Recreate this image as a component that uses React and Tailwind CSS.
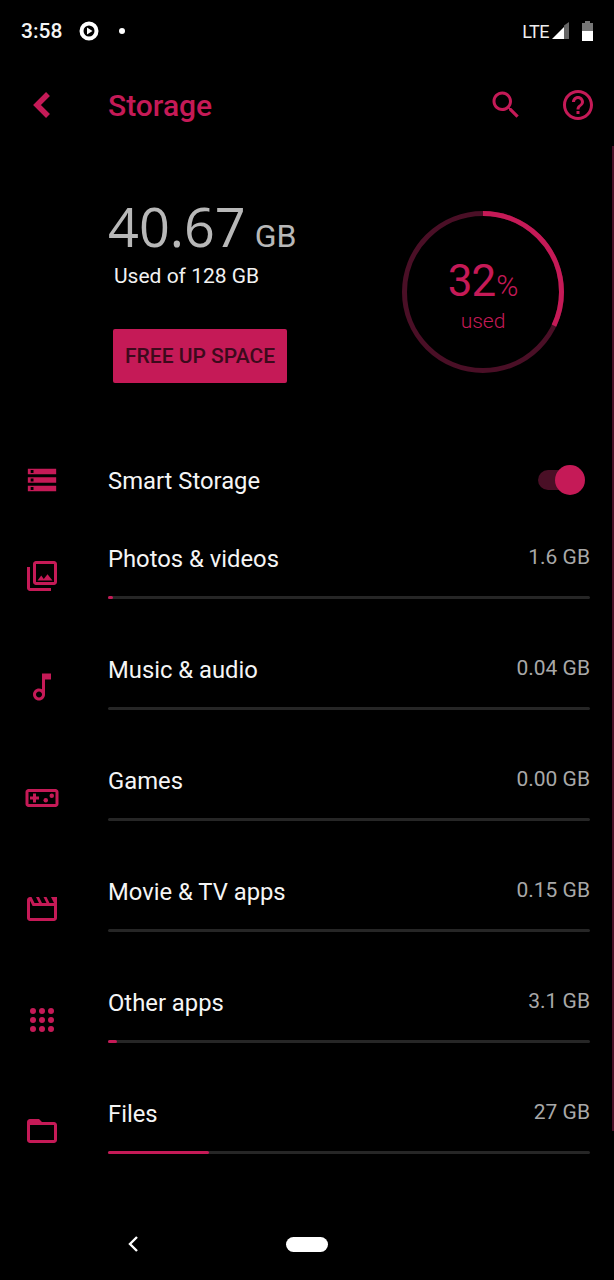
const PINK = '#c51a57';

const Icon = ({ size = 36, className = '', children }) => (
  <svg width={size} height={size} viewBox="0 0 24 24" fill={PINK} className={className}>
    {children}
  </svg>
);

const rows = [
  {
    label: 'Photos & videos',
    size: '1.6 GB',
    used: 5,
    icon: <path d="M20 4v12H8V4h12m0-2H8c-1.1 0-2 .9-2 2v12c0 1.1.9 2 2 2h12c1.1 0 2-.9 2-2V4c0-1.1-.9-2-2-2zm-8.5 9.67l1.69 2.26 2.48-3.1L19 15H9zM2 6v14c0 1.1.9 2 2 2h14v-2H4V6H2z" />,
  },
  {
    label: 'Music & audio',
    size: '0.04 GB',
    used: 0,
    icon: <path d="M12 3l.01 10.55c-.59-.34-1.27-.55-2.01-.55C7.79 13 6 14.79 6 17s1.79 4 4.01 4S14 19.21 14 17V7h4V3h-6zm-1.99 16c-1.1 0-2-.9-2-2s.9-2 2-2 2 .9 2 2-.9 2-2 2z" />,
  },
  {
    label: 'Games',
    size: '0.00 GB',
    used: 0,
    icon: (
      <>
        <path d="M21 6H3c-1.1 0-2 .9-2 2v8c0 1.1.9 2 2 2h18c1.1 0 2-.9 2-2V8c0-1.1-.9-2-2-2zm0 10H3V8h18v8zM6 15h2v-2h2v-2H8V9H6v2H4v2h2z" />
        <circle cx="14.5" cy="13.5" r="1.5" />
        <circle cx="18.5" cy="10.5" r="1.5" />
      </>
    ),
  },
  {
    label: 'Movie & TV apps',
    size: '0.15 GB',
    used: 0,
    icon: <path d="M4 6.47L5.76 10H20v8H4V6.47M22 4h-4l2 4h-3l-2-4h-2l2 4h-3l-2-4H8l2 4H7L5 4H4c-1.1 0-1.99.9-1.99 2L2 18c0 1.1.9 2 2 2h16c1.1 0 2-.9 2-2V4z" />,
  },
  {
    label: 'Other apps',
    size: '3.1 GB',
    used: 9,
    icon: (
      <>
        {[6, 12, 18].map((y) =>
          [6, 12, 18].map((x) => <circle key={`${x}-${y}`} cx={x} cy={y} r="2" />)
        )}
      </>
    ),
  },
  {
    label: 'Files',
    size: '27 GB',
    used: 101,
    icon: <path d="M20 6h-8l-2-2H4c-1.1 0-1.99.9-1.99 2L2 18c0 1.1.9 2 2 2h16c1.1 0 2-.9 2-2V8c0-1.1-.9-2-2-2zm0 12H4V8h16v10z" />,
  },
];

const StatusBar = () => (
  <div className="h-[62px] flex items-center justify-between pl-[21px] pr-[21px] text-white">
    <div className="flex items-center">
      <span className="text-[21px] font-medium w-[48px] text-[#f5f5f5] mt-[2px]">3:58</span>
      <svg width="20" height="20" viewBox="0 0 20 20" className="ml-[10px]">
        <circle cx="10" cy="10" r="7.5" fill="none" stroke="#fff" strokeWidth="4" />
        <path d="M8 6.5v7l5.5-3.5z" fill="#fff" />
      </svg>
      <div className="w-[6px] h-[6px] rounded-full bg-white ml-[20px]" />
    </div>
    <div className="flex items-center">
      <span className="text-[18px] text-[#eeeeee] tracking-[-0.5px]">LTE</span>
      <svg width="18" height="18" viewBox="0 0 18 18" className="ml-[3px]">
        <path d="M0 17L12 5v12z" fill="#fff" />
        <path d="M12 3.5L17 0v17h-5z" fill="#666" />
      </svg>
      <svg width="11" height="20" viewBox="0 0 11 20" className="ml-[12px]">
        <path d="M3 0h5v2h3v9H0V2h3z" fill="#777" />
        <path d="M0 10h11v10H0z" fill="#fff" />
      </svg>
    </div>
  </div>
);

const Header = () => (
  <div className="h-[86px] flex items-center relative">
    <div className="w-[108px] flex justify-center pr-[22px]">
      <svg width="24" height="30" viewBox="0 0 24 30">
        <path d="M17 4L6 15l11 11" fill="none" stroke={PINK} strokeWidth="5.5" />
      </svg>
    </div>
    <h1 className="text-[30px] font-medium leading-none mt-[2px]" style={{ color: PINK }}>Storage</h1>
    <div className="ml-auto flex items-center gap-[36px] pr-[18px]">
      <Icon>
        <path d="M15.5 14h-.79l-.28-.27C15.41 12.59 16 11.11 16 9.5 16 5.91 13.09 3 9.5 3S3 5.91 3 9.5 5.91 16 9.5 16c1.61 0 3.09-.59 4.23-1.57l.27.28v.79l5 4.99L20.49 19l-4.99-5zm-6 0C7.01 14 5 11.99 5 9.5S7.01 5 9.5 5 14 7.01 14 9.5 11.99 14 9.5 14z" />
      </Icon>
      <Icon>
        <path d="M11 18h2v-2h-2v2zm1-16C6.48 2 2 6.48 2 12s4.48 10 10 10 10-4.48 10-10S17.52 2 12 2zm0 18c-4.41 0-8-3.59-8-8s3.59-8 8-8 8 3.59 8 8-3.59 8-8 8zm0-14c-2.21 0-4 1.79-4 4h2c0-1.1.9-2 2-2s2 .9 2 2c0 2-3 1.75-3 5h2c0-2.25 3-2.5 3-5 0-2.21-1.79-4-4-4z" />
      </Icon>
    </div>
  </div>
);

const Ring = () => (
  <div className="relative w-[164px] h-[164px]">
    <svg width="164" height="164" viewBox="0 0 164 164">
      <circle cx="82" cy="82" r="78.5" fill="none" stroke="#4a0f26" strokeWidth="5" />
      <circle
        cx="82"
        cy="82"
        r="78.5"
        fill="none"
        stroke={PINK}
        strokeWidth="5"
        strokeDasharray="157.8 335.4"
        transform="rotate(-90 82 82)"
      />
    </svg>
    <div className="absolute inset-0 flex flex-col items-center justify-center" style={{ color: PINK }}>
      <div className="flex items-baseline leading-none mt-[8px]">
        <span className="text-[44px] leading-[44px] tracking-[-1px]">32</span>
        <span className="text-[30px] font-light leading-[28px] ml-[1px]">%</span>
      </div>
      <span className="text-[21px] font-light leading-[24px] mt-[6px]">used</span>
    </div>
  </div>
);

const Hero = () => (
  <div className="h-[292px] flex items-start justify-between pl-[108px] pr-[49px]">
    <div className="pt-[48px]">
      <div className="flex items-baseline text-[#b8b8b8] leading-none">
        <span className="text-[54px] leading-[60px]" style={{ fontFamily: '"Open Sans", sans-serif' }}>40.67</span>
        <span className="text-[32px] ml-[9px]">GB</span>
      </div>
      <p className="text-[21px] leading-[28px] text-[#f2f2f2] ml-[6px] mt-[6px]">Used of 128 GB</p>
      <button className="mt-[39px] ml-[5px] w-[174px] h-[54px] rounded-[2px] text-[21px] font-medium text-[#3d0a1c] pt-[2px]" style={{ backgroundColor: PINK }}>
        FREE UP SPACE
      </button>
    </div>
    <div className="pt-[62px]">
      <Ring />
    </div>
  </div>
);

const StorageRow = ({ row }) => (
  <div className="h-[111px] flex items-center">
    <div className="w-[108px] flex justify-center pr-[24px]">
      <Icon>{row.icon}</Icon>
    </div>
    <div className="flex-1 self-start pt-[23px] pr-[24px]">
      <div className="flex justify-between h-[32px]">
        <span className="text-[23.8px] leading-[32px] text-[#f5f5f5]">{row.label}</span>
        <span className="text-[21px] leading-[28px] text-[#a8a8a8]">{row.size}</span>
      </div>
      <div className="mt-[21px] h-[3px] bg-[#262626] rounded-full">
        <div className="h-full rounded-full" style={{ width: row.used, backgroundColor: PINK }} />
      </div>
    </div>
  </div>
);

export default function App() {
  return (
    <div className="relative w-[614px] h-[1280px] bg-black overflow-hidden" style={{ fontFamily: 'Roboto, sans-serif' }}>
      <StatusBar />
      <Header />
      <Hero />
      <div className="h-[80px] flex items-center">
        <div className="w-[108px] flex justify-center pr-[24px]">
          <Icon size={34}>
            <path d="M2 20h20v-4H2v4zm2-3h2v2H4v-2zM2 4v4h20V4H2zm4 3H4V5h2v2zm-4 7h20v-4H2v4zm2-3h2v2H4v-2z" />
          </Icon>
        </div>
        <span className="text-[23.8px] text-[#f5f5f5] mt-[4px]">Smart Storage</span>
        <div className="ml-auto mr-[29px] relative w-[47px] h-[30px] flex items-center">
          <div className="w-[40px] h-[20px] rounded-full bg-[#4a0f26]" />
          <div className="absolute right-0 w-[30px] h-[30px] rounded-full" style={{ backgroundColor: PINK }} />
        </div>
      </div>
      {rows.map((row) => (
        <StorageRow key={row.label} row={row} />
      ))}
      <div className="absolute left-0 right-0 bottom-[14px] h-[44px] flex items-center">
        <svg width="16" height="20" viewBox="0 0 16 20" className="ml-[125px]">
          <path d="M12 3L5 10l7 7" fill="none" stroke="#fff" strokeWidth="2.4" />
        </svg>
        <div className="ml-[145px] w-[42px] h-[15px] rounded-full bg-white" />
      </div>
      <div className="absolute right-0 top-[146px] w-[2px] h-[985px] bg-[#4a0f26]" />
    </div>
  );
}
